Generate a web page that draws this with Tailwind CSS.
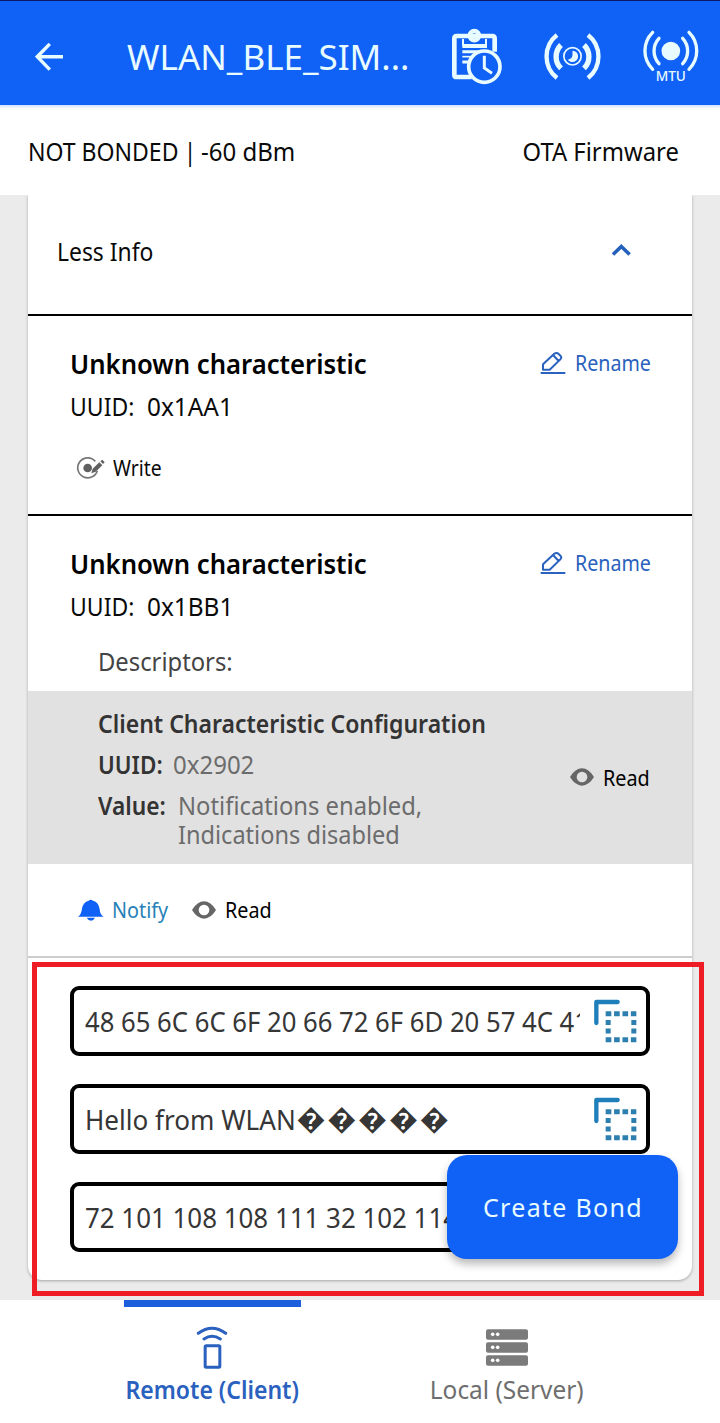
<!DOCTYPE html>
<html lang="en">
<head>
<meta charset="utf-8">
<title>WLAN_BLE_SIMPLE</title>
<script src="https://cdn.jsdelivr.net/npm/@tailwindcss/browser@4"></script>
</head>
<body class="relative flex h-[1423px] w-[720px] flex-col overflow-hidden bg-[#ebebeb] font-['Noto_Sans','DejaVu_Sans',sans-serif] text-[25px] text-[#0a0a0a]">

<!-- App bar -->
<header class="relative flex h-[105px] shrink-0 items-start border-t border-[#0a1a66] bg-[#1061f5] text-[#e8fbff]">
  <svg class="mt-[41px] ml-[35px] h-[30px] w-[30px] shrink-0" viewBox="0 0 30 30" fill="none" stroke="currentColor" stroke-width="3.400"><path d="M28 14.7H3M14.8 1.9L2.3 14.7l12.5 12.9"/></svg>
  <h1 class="mt-[32px] ml-[62px] w-[323px] text-[35px] leading-[48px] whitespace-pre">WLAN_BLE_SIM...</h1>
  <svg class="mt-[26px] h-[60px] w-[54px] shrink-0" viewBox="60 80 162 180" fill="none" stroke="currentColor">
    <path stroke-width="14" d="M125 230H80q-7 0-7-7V114q0-7 7-7h107q7 0 7 7v40"/>
    <circle cx="133" cy="106" r="14" stroke-width="13"/>
    <path stroke-width="12" d="M97 137h74"/>
    <path stroke-width="6" d="M99 116v20M168 116v20"/>
    <path stroke-width="9" d="M97 154h50M97 185h24"/>
    <path stroke-width="5" d="M97 169h26"/>
    <circle cx="163" cy="199" r="47" stroke-width="11" fill="#1061f5"/>
    <path stroke-width="9" d="M163 166v37l23 16"/>
  </svg>
  <svg class="mt-[29px] ml-[39px] h-[52px] w-[59px] shrink-0" viewBox="339 90 177 156" fill="none" stroke="currentColor">
    <path stroke-width="13" d="M381 105a82 82 0 0 0 0 129M474 105a82 82 0 0 1 0 129"/>
    <path stroke-width="16" d="M393 135a49 49 0 0 0 0 70M462 135a49 49 0 0 1 0 70"/>
    <circle cx="427.500" cy="169" r="26" stroke-width="5"/>
    <path fill="currentColor" stroke="none" d="M427.500 152a17 17 0 1 1-14 27q13-2 14-14z"/>
  </svg>
  <svg class="mt-[27px] ml-[40px] h-[56px] w-[58px] shrink-0" viewBox="636 84 174 168" fill="none" stroke="currentColor" stroke-linecap="round">
    <circle cx="722.500" cy="153" r="28" fill="currentColor" stroke="none"/>
    <path stroke-width="10" d="M668 97a78 78 0 0 0 0 111M777 97a78 78 0 0 1 0 111M687 115a56 56 0 0 0 0 76M758 115a56 56 0 0 1 0 76"/>
    <text x="677" y="243" font-size="41" font-weight="500" fill="currentColor" stroke="none">MTU</text>
  </svg>
</header>

<!-- Connection status -->
<section class="z-10 flex h-[90px] shrink-0 items-center justify-between bg-white pt-[4px] pr-[39px] pl-[28px] text-[24.5px] leading-[34px] shadow-[inset_0_4px_3px_-2px_#cfe2ff]">
  <div class="flex whitespace-nowrap"><span class="w-[156px] origin-left scale-x-[0.94]">NOT BONDED</span><span class="w-[17px] origin-left scale-x-[0.9]">|</span><span class="origin-left scale-x-[0.98]">-60 dBm</span></div>
  <span class="mr-[2px] origin-right scale-x-[0.972] whitespace-nowrap">OTA Firmware</span>
</section>

<!-- Service card -->
<main class="mx-[28px] flex h-[1085px] shrink-0 flex-col rounded-b-[14px] bg-white shadow-[0_1px_3px_rgba(0,0,0,0.3)]">
  <div class="flex h-[119px] shrink-0 items-center justify-between pr-[61px] pb-[7px] pl-[28.500px]">
    <span class="origin-left scale-x-[0.915] leading-[34px]">Less Info</span>
    <svg class="mb-[3px] h-[12px] w-[20px]" viewBox="0 0 20 12" fill="none" stroke="#2560bd" stroke-width="3.600"><path d="M2 10.500L10.300 2.500l8.300 8"/></svg>
  </div>

  <div class="flex h-[200px] shrink-0 flex-col border-t-2 border-black pl-[42px]">
    <div class="mt-[30px] flex h-[36px] items-center">
      <span class="w-[470px] origin-left scale-x-[0.951] text-[27px] font-semibold text-black">Unknown characteristic</span>
      <svg class="mb-[2px] h-[24px] w-[26px] shrink-0" viewBox="120 392 78 72" fill="none" stroke="#2a62c0" stroke-width="6"><path d="M122 458h74"/><path stroke-linejoin="round" d="M129 448v-16l33-31q8-6 14 0l6 6q4 5-1 10l-32 31zM159 404l17 18"/></svg>
      <span class="mb-[2px] ml-[9px] origin-left scale-x-[0.914] text-[21.5px] text-[#2a62bd]">Rename</span>
    </div>
    <div class="mt-[7px] flex leading-[34px]"><span class="w-[77px] origin-left scale-x-[0.92]">UUID:</span><span class="origin-left scale-x-[0.975]">0x1AA1</span></div>
    <div class="mt-[30px] flex h-[30px] items-center pl-[6px]">
      <svg class="h-[24px] w-[29px] shrink-0" viewBox="228 798 87 72" fill="none" stroke="#777"><path stroke-width="5" d="M292 842a30 30 0 1 1-6-28"/><circle cx="263" cy="834" r="13" fill="#606060" stroke="none"/><path fill="#606060" stroke="none" d="M274 850l4-14 20-19 9 9-20 19zM301 814l6-5 7 8-5 5z"/></svg>
      <span class="ml-[8px] origin-left scale-x-[0.9] text-[21.5px]">Write</span>
    </div>
  </div>

  <div class="flex h-[442px] shrink-0 flex-col border-t-2 border-black">
    <div class="mt-[30px] flex h-[36px] items-center pl-[42px]">
      <span class="w-[470px] origin-left scale-x-[0.951] text-[27px] font-semibold text-black">Unknown characteristic</span>
      <svg class="mb-[2px] h-[24px] w-[26px] shrink-0" viewBox="120 392 78 72" fill="none" stroke="#2a62c0" stroke-width="6"><path d="M122 458h74"/><path stroke-linejoin="round" d="M129 448v-16l33-31q8-6 14 0l6 6q4 5-1 10l-32 31zM159 404l17 18"/></svg>
      <span class="mb-[2px] ml-[9px] origin-left scale-x-[0.914] text-[21.5px] text-[#2a62bd]">Rename</span>
    </div>
    <div class="mt-[7px] ml-[42px] flex leading-[34px]"><span class="w-[77px] origin-left scale-x-[0.92]">UUID:</span><span class="origin-left scale-x-[0.975]">0x1BB1</span></div>
    <span class="mt-[21px] ml-[70px] origin-left scale-x-[0.951] leading-[34px] text-[#444]">Descriptors:</span>

    <div class="mt-[13px] flex h-[173px] shrink-0 bg-[#e1e1e1] pl-[70px] text-[#333]">
      <div class="w-[471px] shrink-0 pt-[15px]">
        <div class="h-[41px] origin-left scale-x-[0.92] leading-[34px] font-semibold whitespace-nowrap">Client Characteristic Configuration</div>
        <div class="flex h-[41px] leading-[34px]"><span class="w-[75px] origin-left scale-x-[0.9] font-semibold">UUID:</span><span class="origin-left scale-x-[0.96] text-[#6c6c6c]">0x2902</span></div>
        <div class="flex"><span class="w-[80px] origin-left scale-x-[0.91] leading-[34px] font-semibold">Value:</span><div class="flex flex-col pt-[3px] leading-[29px] whitespace-nowrap text-[#6c6c6c]"><span class="origin-left scale-x-[0.951]">Notifications enabled,</span><span class="origin-left scale-x-[0.942]">Indications disabled</span></div></div>
      </div>
      <div class="flex h-[171px] items-center text-[21.5px] text-black">
        <svg class="ml-px h-[18px] w-[24px]" viewBox="516 453 72 54"><path fill="#666" fill-rule="evenodd" d="M516 480q16-26 36-26t36 26q-16 26-36 26t-36-26zM552 464a16 16 0 1 0 0 32a16 16 0 1 0 0-32z"/></svg>
        <span class="mt-[4px] ml-[9px] origin-left scale-x-[0.92]">Read</span>
      </div>
    </div>

    <div class="flex h-[91px] items-center pt-px pl-[50px] text-[21.5px]">
      <svg class="h-[22px] w-[26px]" viewBox="174 447 78 66" fill="#1061f5"><path d="M174 500q10-7 12-24q3-20 20-24q6-6 13 0q17 4 20 26q1 17 12 22z"/><path d="M200 503h25q-4 9-12 9t-13-9z"/></svg>
      <span class="ml-[8px] w-[80px] origin-left scale-x-[0.92] text-[#2581b8]">Notify</span>
      <svg class="h-[18px] w-[24px]" viewBox="516 453 72 54"><path fill="#666" fill-rule="evenodd" d="M516 480q16-26 36-26t36 26q-16 26-36 26t-36-26zM552 464a16 16 0 1 0 0 32a16 16 0 1 0 0-32z"/></svg>
      <span class="ml-[9px] origin-left scale-x-[0.92] text-black">Read</span>
    </div>
  </div>

  <div class="flex flex-col gap-[28px] border-t-2 border-[#cdcdcd] pt-[28px] pl-[42px] text-[28px] text-[#363636]">
    <div class="flex h-[70px] w-[580px] items-center justify-between rounded-[9px] border-4 border-black pr-[9px] pl-[10.500px]">
      <div class="w-[495px] overflow-hidden"><div class="origin-left scale-x-[0.917] whitespace-nowrap">48 65 6C 6C 6F 20 66 72 6F 6D 20 57 4C 41</div></div>
      <svg class="h-[44px] w-[44px] shrink-0" viewBox="519 87 132 132" fill="none" stroke="#1f7fba"><path stroke-width="13" stroke-linecap="round" stroke-linejoin="round" d="M529 159V96h64"/><path stroke="#2c7fae" stroke-width="15" stroke-dasharray="17 8.200" d="M557 131h92M557 209h92"/><path stroke="#2c7fae" stroke-width="15" stroke-dasharray="15 10.500" d="M564.500 150v42M641.500 150v42"/></svg>
    </div>
    <div class="flex h-[70px] w-[580px] items-center justify-between rounded-[9px] border-4 border-black pr-[9px] pl-[10.500px]">
      <div class="flex items-center whitespace-nowrap"><span class="w-[212px] origin-left scale-x-[0.932]">Hello from WLAN</span><span class="mb-[2px] text-[29px] leading-[38px] tracking-[1.800px]">&#xFFFD;&#xFFFD;&#xFFFD;&#xFFFD;&#xFFFD;</span></div>
      <svg class="h-[44px] w-[44px] shrink-0" viewBox="519 87 132 132" fill="none" stroke="#1f7fba"><path stroke-width="13" stroke-linecap="round" stroke-linejoin="round" d="M529 159V96h64"/><path stroke="#2c7fae" stroke-width="15" stroke-dasharray="17 8.200" d="M557 131h92M557 209h92"/><path stroke="#2c7fae" stroke-width="15" stroke-dasharray="15 10.500" d="M564.500 150v42M641.500 150v42"/></svg>
    </div>
    <div class="flex h-[70px] w-[580px] items-center rounded-[9px] border-4 border-black pl-[10.500px]">
      <div class="origin-left scale-x-[0.925] whitespace-nowrap">72 101 108 108 111 32 102 114</div>
    </div>
  </div>
</main>

<!-- Floating action button -->
<button class="absolute top-[1155px] left-[447px] flex h-[104px] w-[231px] items-center rounded-[20px] bg-[#1061f5] pt-[2px] pl-[36px] text-[25px] tracking-[1.300px] whitespace-nowrap text-[#e8fbff] shadow-[0_5px_9px_rgba(0,0,0,0.28)]">Create Bond</button>

<!-- Highlight frame -->
<div class="absolute top-[962px] left-[32px] h-[334px] w-[672px] border-5 border-[#ee1c25]"></div>

<!-- Bottom tabs -->
<nav class="mt-auto flex h-[123px] shrink-0 bg-white">
  <div class="flex w-[424px] flex-col items-center text-[#2a61bf]">
    <div class="h-[7px] w-[177px] bg-[#1b5fdd]"></div>
    <svg class="mt-[18px] h-[45px] w-[32px]" viewBox="288 135 96 135" fill="none" stroke="currentColor" stroke-width="9" stroke-linecap="round"><rect x="315.500" y="197" width="44" height="65" rx="3"/><path d="M295 160q41-30 82 0M312 177q24-16 49 0"/></svg>
    <span class="mt-[2px] scale-x-[0.92] leading-[34px] font-semibold whitespace-nowrap">Remote (Client)</span>
  </div>
  <div class="flex w-[166px] flex-col items-center text-[#6e6e6e]">
    <svg class="mt-[29px] h-[37px] w-[42px]" viewBox="228 148 126 111"><g fill="#7b7b7b"><rect x="228" y="149" width="126" height="31" rx="6"/><rect x="228" y="188" width="126" height="31" rx="6"/><rect x="228" y="227" width="126" height="31" rx="6"/></g><g fill="#fff"><circle cx="248" cy="164" r="5.500"/><circle cx="263" cy="164" r="5.500"/><circle cx="248" cy="203" r="5.500"/><circle cx="263" cy="203" r="5.500"/><circle cx="248" cy="242" r="5.500"/><circle cx="263" cy="242" r="5.500"/></g></svg>
    <span class="mt-[6px] scale-x-[0.977] leading-[34px] whitespace-nowrap">Local (Server)</span>
  </div>
</nav>
</body>
</html>
